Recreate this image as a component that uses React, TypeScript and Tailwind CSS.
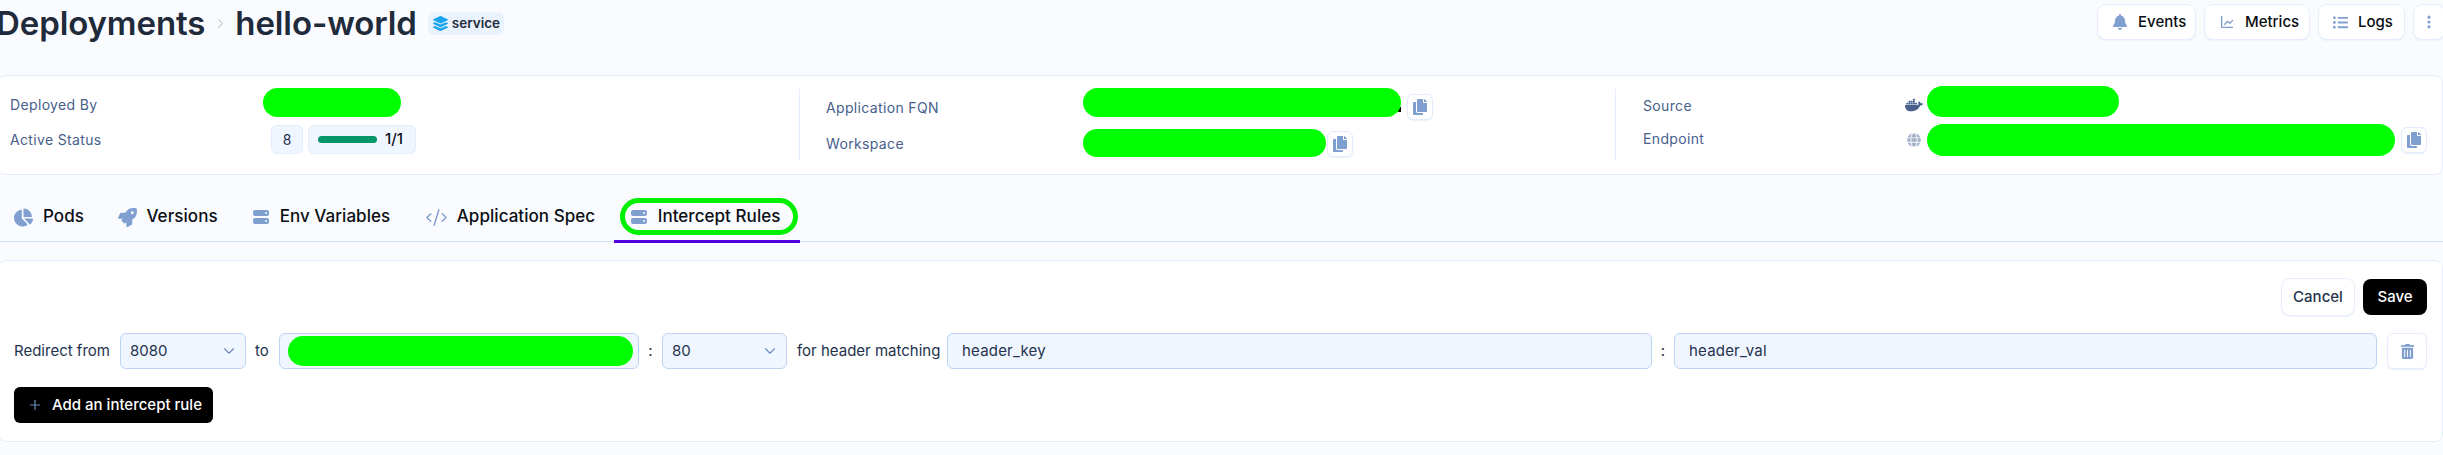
import React from "react";
import { ChevronDown, ChevronRight, Plus, CodeXml } from "lucide-react";
import { FaBell, FaChartPie, FaCopy, FaDocker, FaGlobe, FaLayerGroup, FaListUl, FaRocket, FaTrashAlt } from "react-icons/fa";
import { HiDotsVertical, HiServer } from "react-icons/hi";
import { BiLineChart } from "react-icons/bi";

function Redacted({ className }: { className: string }) {
  return <div className={"rounded-full bg-[#00ff00] " + className} />;
}

function CopyBtn({ className = "" }: { className?: string }) {
  return (
    <div className={"flex h-[26px] w-[26px] items-center justify-center rounded-md border border-[#e2ecfb] bg-white text-[#7f9fd1] shadow-[0_1px_1px_rgba(90,130,200,0.12)] " + className}>
      <FaCopy className="h-[16px] w-[16px]" />
    </div>
  );
}

function TopBtn({ icon, label, className }: { icon: React.ReactNode; label: string; className: string }) {
  return (
    <div className={"flex h-[34px] items-center rounded-lg bg-white text-[15px] font-medium text-[#0b0f14] shadow-[0_0_0_1px_#e6eefb,0_1px_2px_rgba(90,130,200,0.28)] " + className}>
      {icon}
      <span>{label}</span>
    </div>
  );
}

function Tab({ icon, label, className }: { icon: React.ReactNode; label: string; className: string }) {
  return (
    <div className={"relative flex h-[66px] items-center pt-[18px] text-[17px] font-medium tracking-[0.05px] text-[#0b0f14] " + className}>
      {icon}
      <span>{label}</span>
    </div>
  );
}

function Label({ children, className = "" }: { children: React.ReactNode; className?: string }) {
  return <div className={"text-[14px] tracking-[0.35px] text-[#47608c] " + className}>{children}</div>;
}

function SelectBox({ value, className }: { value: string; className: string }) {
  return (
    <div className={"flex h-[36px] items-center justify-between rounded-md border border-[#bdd4f3] bg-[#f0f6ff] pl-[9px] pr-[7px] text-[15px] text-[#25324d] " + className}>
      <span>{value}</span>
      <ChevronDown className="h-[18px] w-[18px] text-[#6d8cbd]" strokeWidth={1.5} />
    </div>
  );
}

const ServerIcon = ({ className }: { className: string }) => <HiServer className={className} />;

export default function App() {
  return (
    <div className="h-[455px] w-[2443px] overflow-hidden bg-[#fafbff] font-['Inter',sans-serif]">
      <div className="flex h-[75px] items-start justify-between">
        <div className="flex h-[46px] items-center">
          <span className="ml-[-4px] text-[33px] leading-none font-semibold tracking-[-0.1px] text-[#1f2a3a]">Deployments</span>
          <ChevronRight className="mx-[7.5px] h-[15px] w-[15px] text-[#a4adbb]" strokeWidth={1.5} />
          <span className="text-[33px] leading-none font-semibold tracking-[-0.1px] text-[#1f2a3a]">hello-world</span>
          <div className="ml-[11px] flex h-[23px] w-[76px] items-center gap-[4px] rounded-md bg-[#eaf2fe] pl-[5px] text-[13.5px] font-semibold text-[#1f2a3a]">
            <FaLayerGroup className="h-[15px] w-[15px] text-[#1ba5f0]" />
            <span>service</span>
          </div>
        </div>
        <div className="mt-[5px] mr-[-1px] flex gap-[10px]">
          <TopBtn className="w-[97px] gap-[10px] pl-[14px]" icon={<FaBell className="h-[16px] w-[16px] text-[#7f9fd1]" />} label="Events" />
          <TopBtn className="w-[104px] gap-[10px] pl-[14px]" icon={<BiLineChart className="h-[16px] w-[16px] text-[#7f9fd1]" />} label="Metrics" />
          <TopBtn className="w-[85px] gap-[10px] pl-[14px]" icon={<FaListUl className="h-[15px] w-[15px] text-[#7f9fd1]" />} label="Logs" />
          <div className="flex h-[34px] w-[30px] items-center justify-center rounded-lg bg-white text-[#7f9fd1] shadow-[0_0_0_1px_#e6eefb,0_1px_2px_rgba(90,130,200,0.28)]">
            <HiDotsVertical className="h-[16px] w-[16px]" />
          </div>
        </div>
      </div>

      <div className="ml-[-2px] flex h-[100px] rounded-lg border border-[#e4edfb] bg-white">
        <div className="w-[800px] pt-[12px] pl-[11px]">
          <div className="flex items-center">
            <Label className="w-[253px] pt-[3px]">Deployed By</Label>
            <Redacted className="h-[29px] w-[138px]" />
          </div>
          <div className="mt-[8px] flex items-center">
            <Label className="w-[261px]">Active Status</Label>
            <div className="flex h-[29px] w-[32px] items-center justify-center rounded-md border border-[#e2ecfb] bg-[#f0f6ff] text-[14px] text-[#25324d]">8</div>
            <div className="ml-[5px] flex h-[29px] w-[108px] items-center rounded-md border border-[#e2ecfb] bg-[#f0f6ff] pl-[9px] text-[15px] font-medium text-[#0b0f14]">
              <div className="h-[7px] w-[59px] rounded-full bg-[#059669]" />
              <span className="ml-[8px]">1/1</span>
            </div>
          </div>
        </div>

        <div className="my-[13px] w-[816px] border-l border-[#e4edfb]">
          <div className="mt-[-1px] flex items-start pl-[26px]">
            <Label className="mt-[9px] w-[257px]">Application FQN</Label>
            <div className="relative">
              <div className="absolute right-0 bottom-[5px] h-[5px] w-[3px] bg-black" />
              <Redacted className="relative h-[29px] w-[318px]" />
            </div>
            <CopyBtn className="mt-[6px] ml-[6px]" />
          </div>
          <div className="mt-[9px] flex items-center pl-[26px]">
            <Label className="w-[257px]">Workspace</Label>
            <Redacted className="h-[28px] w-[243px]" />
            <CopyBtn className="mt-[2px] ml-[1px]" />
          </div>
        </div>

        <div className="my-[13px] flex-1 border-l border-[#e4edfb]">
          <div className="mt-[-3px] flex items-center pl-[27px]">
            <Label className="w-[262px] pt-[7px]">Source</Label>
            <FaDocker className="mt-[7px] mr-[4px] h-[18px] w-[18px] text-[#47608c]" />
            <Redacted className="h-[31px] w-[192px]" />
          </div>
          <div className="mt-[7px] flex items-center pl-[27px]">
            <Label className="w-[264px] pb-[4px]">Endpoint</Label>
            <FaGlobe className="mr-[6px] h-[14px] w-[14px] text-[#a3b1c9]" />
            <Redacted className="h-[32px] w-[468px]" />
            <CopyBtn className="ml-[6px]" />
          </div>
        </div>
      </div>

      <div className="flex h-[67px] gap-[1px] border-b border-[#d3e2f8]">
        <Tab className="pr-[16px] pl-[14px]" icon={<FaChartPie className="mr-[10px] h-[19px] w-[19px] text-[#7f9fd1]" />} label="Pods" />
        <Tab className="pr-[15px] pl-[17px]" icon={<FaRocket className="mr-[9.5px] h-[19px] w-[19px] text-[#7f9fd1]" />} label="Versions" />
        <Tab className="pr-[16.5px] pl-[17px]" icon={<ServerIcon className="mr-[9px] h-[20px] w-[20px] text-[#7f9fd1]" />} label="Env Variables" />
        <Tab className="pr-[18px] pl-[17px]" icon={<CodeXml className="mr-[9px] h-[23px] w-[23px] text-[#7f9fd1]" strokeWidth={1.5} />} label="Application Spec" />
        <div className="relative">
          <Tab className="pr-[20px] pl-[14.5px]" icon={<ServerIcon className="mr-[9px] h-[20px] w-[20px] text-[#7f9fd1]" />} label="Intercept Rules" />
          <div className="absolute top-[23px] left-[6px] h-[37px] w-[178px] rounded-full border-[5px] border-[#00f000]" />
          <div className="absolute bottom-[-2px] left-0 h-[3px] w-full bg-[#5200e0]" />
        </div>
      </div>

      <div className="mt-[18px] ml-[-2px] h-[182px] rounded-lg border border-[#e4edfb] bg-white pt-[18px] pr-[15px] pl-[15px]">
        <div className="flex justify-end gap-[9px]">
          <div className="flex h-[36px] w-[72px] items-center justify-center rounded-lg bg-white text-[15px] font-medium text-[#25324d] shadow-[0_0_0_1px_#e6eefb,0_1px_2px_rgba(90,130,200,0.28)]">Cancel</div>
          <div className="flex h-[36px] w-[64px] items-center justify-center rounded-lg bg-black text-[15px] font-medium text-white">Save</div>
        </div>
        <div className="mt-[18px] flex items-center text-[15px] text-[#25324d]">
          <span className="w-[106px]">Redirect from</span>
          <SelectBox value="8080" className="w-[126px]" />
          <span className="ml-[9px] w-[24px]">to</span>
          <div className="flex h-[36px] w-[360px] items-center rounded-md border border-[#bdd4f3] bg-[#f0f6ff] pr-[5px] pl-[8px]">
            <Redacted className="h-[30px] w-[345px]" />
          </div>
          <span className="w-[23px] text-center">:</span>
          <SelectBox value="80" className="w-[125px]" />
          <span className="ml-[10px] w-[150px]">for header matching</span>
          <div className="flex h-[36px] w-[705px] items-center rounded-md border border-[#bdd4f3] bg-[#f0f6ff] pl-[14px] tracking-[0.2px]">header_key</div>
          <span className="w-[22px] text-center">:</span>
          <div className="flex h-[36px] w-[703px] items-center rounded-md border border-[#bdd4f3] bg-[#f0f6ff] pl-[14px] tracking-[0.2px]">header_val</div>
          <div className="ml-[10px] flex h-[36px] w-[40px] items-center justify-center rounded-md border border-[#e6eefb] bg-white text-[#7f9fd1] shadow-[0_1px_1px_rgba(90,130,200,0.12)]">
            <FaTrashAlt className="h-[15px] w-[15px]" />
          </div>
        </div>
        <div className="mt-[18px] flex h-[36px] w-[199px] items-center rounded-md bg-black pl-[13px] text-[15px] font-medium text-white">
          <Plus className="mr-[9px] h-[16px] w-[16px] text-[#6d8cbd]" strokeWidth={1.75} />
          <span>Add an intercept rule</span>
        </div>
      </div>
    </div>
  );
}
